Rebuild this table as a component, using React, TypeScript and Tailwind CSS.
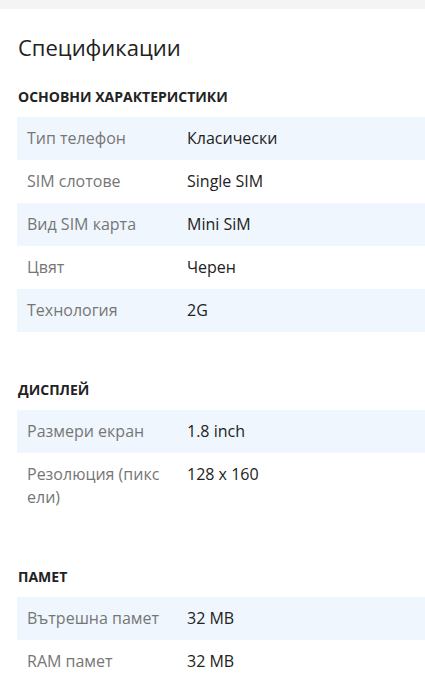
import React from "react";

type Row = { label: string; value: string };

const sections: { title: string; rows: Row[] }[] = [
  {
    title: "ОСНОВНИ ХАРАКТЕРИСТИКИ",
    rows: [
      { label: "Тип телефон", value: "Класически" },
      { label: "SIM слотове", value: "Single SIM" },
      { label: "Вид SIM карта", value: "Mini SiM" },
      { label: "Цвят", value: "Черен" },
      { label: "Технология", value: "2G" },
    ],
  },
  {
    title: "ДИСПЛЕЙ",
    rows: [
      { label: "Размери екран", value: "1.8 inch" },
      { label: "Резолюция (пиксели)", value: "128 x 160" },
    ],
  },
  {
    title: "ПАМЕТ",
    rows: [
      { label: "Вътрешна памет", value: "32 MB" },
      { label: "RAM памет", value: "32 MB" },
    ],
  },
];

export default function App() {
  return (
    <div
      className="w-[425px] h-[699px] overflow-hidden bg-white"
      style={{ fontFamily: '"Open Sans", "Noto Sans", sans-serif' }}
    >
      <div className="h-[9px] bg-[#f4f4f4]" />
      <div className="pl-[17px]">
        <h1 className="pt-[23px] pl-px text-[22px] leading-[30px] text-[#222]">Спецификации</h1>
        {sections.map((s, i) => (
          <div key={s.title} className={i === 0 ? "mt-[25px]" : "mt-[48px]"}>
            <h2 className="pl-px text-[14px] leading-[20px] font-bold text-[#222] uppercase">
              {s.title}
            </h2>
            <div className="mt-[10px]">
              {s.rows.map((r, j) => (
                <div
                  key={r.label}
                  className={`flex py-[10px] ${j % 2 === 0 ? "bg-[#f0f6fd]" : "bg-white"}`}
                >
                  <div className="w-[170px] shrink-0 pl-[10px] pr-[22px] text-[16px] leading-[23px] text-[#767676] break-all">
                    {r.label}
                  </div>
                  <div className="text-[16px] leading-[23px] text-[#222]">{r.value}</div>
                </div>
              ))}
            </div>
          </div>
        ))}
      </div>
    </div>
  );
}
